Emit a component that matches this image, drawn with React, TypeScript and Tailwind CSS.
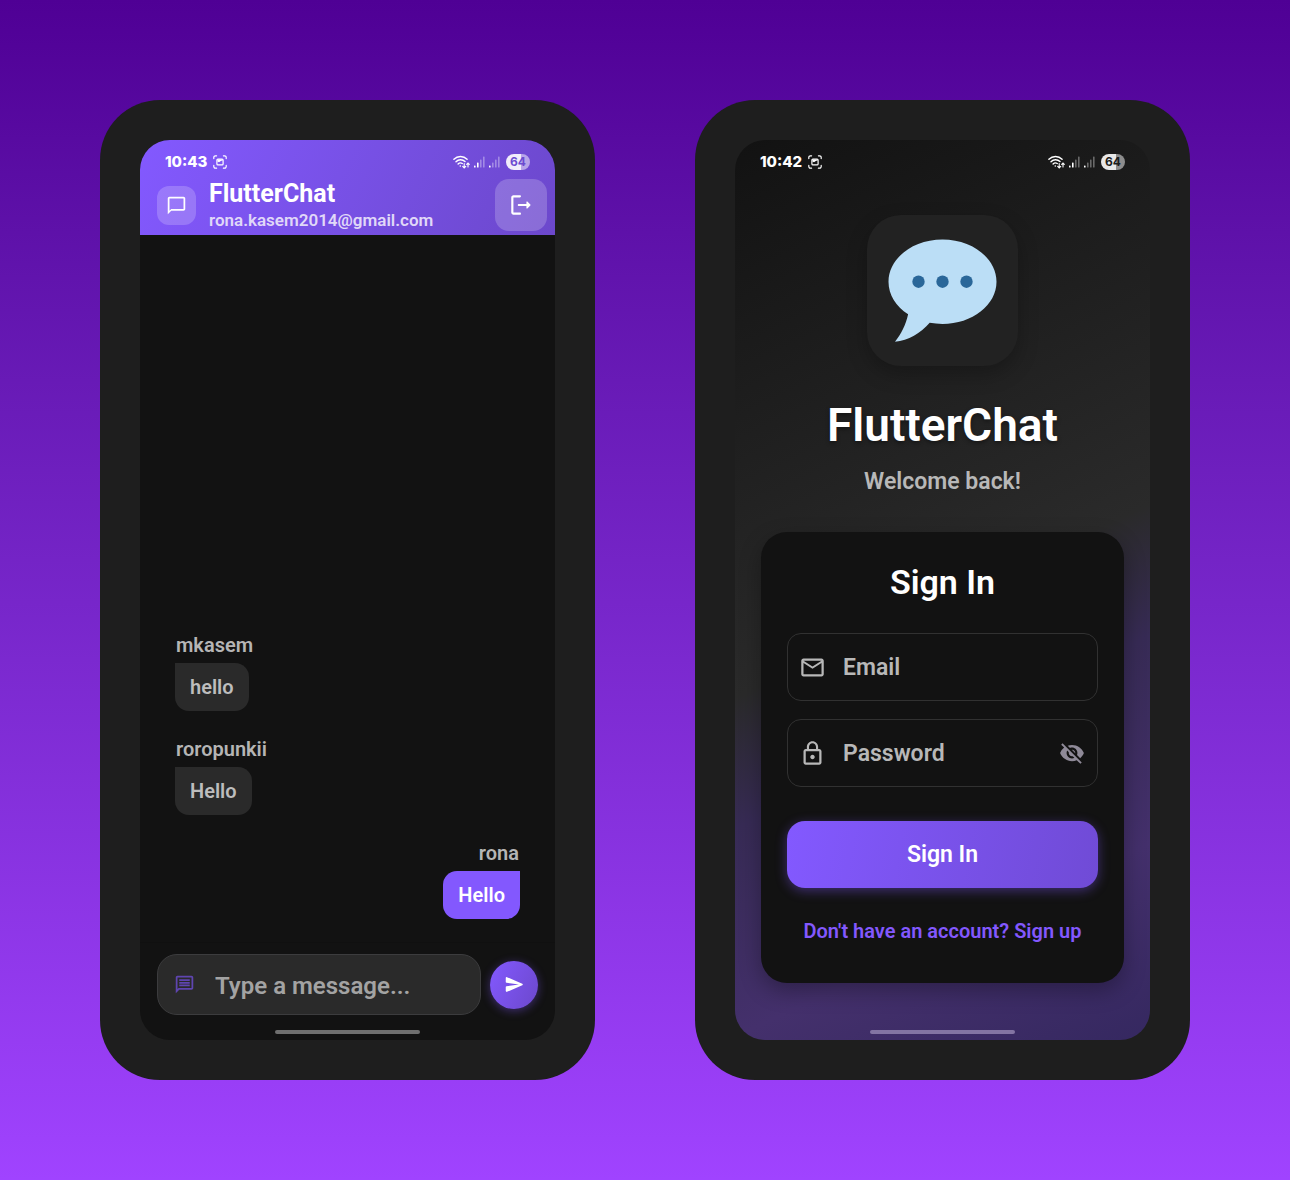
import type { ReactNode } from "react";
import {
  MdLockOutline,
  MdMailOutline,
  MdOutlineChatBubbleOutline,
  MdOutlineMessage,
  MdVisibilityOff,
} from "react-icons/md";

function CaptureIcon() {
  return (
    <svg viewBox="0 0 14 14" className="h-3.5 w-3.5" fill="none" stroke="currentColor" strokeWidth="1.2" strokeLinecap="round">
      <path d="M.8 3.6V2.4A1.6 1.6 0 0 1 2.4.8h1.2M10.4.8h1.2a1.6 1.6 0 0 1 1.6 1.6v1.2M13.2 10.4v1.2a1.6 1.6 0 0 1-1.6 1.6h-1.2M3.6 13.2H2.4a1.6 1.6 0 0 1-1.6-1.6v-1.2" />
      <rect x="3.9" y="4.1" width="6.2" height="5.8" rx="1" />
      <path d="M4.400 6.500V4.500h5.200v1.200H8.200L6 7.200z" fill="currentColor" stroke="none" />
    </svg>
  );
}

function WifiIcon() {
  return (
    <svg viewBox="0 0 17 14" className="h-3.5 w-[17px]" fill="none" stroke="currentColor" strokeWidth="1.4" strokeLinecap="round">
      <path d="M.9 4.2a9.3 9.3 0 0 1 13.2 0M3 6.7a6.3 6.3 0 0 1 9-.1M5.1 9a3.4 3.4 0 0 1 4.2-.5" />
      <circle cx="7.3" cy="11" r=".8" fill="currentColor" stroke="none" />
      <path d="M11.2 8.6v4M9.7 11.4l1.5 1.5 1.5-1.5M15 12V8.200M13.700 9.300 15 8l1.300 1.300" strokeWidth="1.100" />
    </svg>
  );
}

function SignalIcon({ level }: { level: number }) {
  return (
    <svg viewBox="0 0 11 12" className="h-3 w-[11px]" fill="currentColor">
      {[0, 1, 2, 3].map((i) => (
        <rect key={i} x={i * 3} y={[9.5, 6.5, 3.5, 0.5][i]} width="1.6" height={[2, 5, 8, 11][i]} rx=".6" opacity={i < level ? 1 : 0.35} />
      ))}
    </svg>
  );
}

function StatusBar({ time, ink }: { time: string; ink: string }) {
  return (
    <div className="flex h-5 items-center justify-between px-[25px] text-white">
      <div className="flex items-center gap-1.5">
        <span className="font-[Inter] text-[15px] font-extrabold leading-5">{time}</span>
        <CaptureIcon />
      </div>
      <div className="flex items-center gap-1">
        <WifiIcon />
        <SignalIcon level={2} />
        <SignalIcon level={1} />
        <span className={"ml-0.5 flex h-4 w-6 items-center justify-center rounded-full bg-linear-to-r from-white/90 from-64% to-white/50 to-64% font-[Inter] text-[12px] font-bold leading-4 " + ink}>
          64
        </span>
      </div>
    </div>
  );
}

function Phone({ className, children }: { className: string; children: ReactNode }) {
  return (
    <section className="flex rounded-[60px] bg-[#1e1e1e] p-10">
      <div className={"flex min-w-0 flex-1 flex-col overflow-hidden rounded-[30px] " + className}>{children}</div>
    </section>
  );
}

function HomeIndicator({ className }: { className: string }) {
  return <div className={"mx-auto mb-1.5 h-1 w-[35%] rounded-full " + className} />;
}

function Message({ author, text, mine = false }: { author: string; text: string; mine?: boolean }) {
  return (
    <li className={"flex flex-col gap-1.5 " + (mine ? "items-end" : "items-start")}>
      <span className="px-px text-[20px] font-semibold leading-6 text-[#b5b5b5]">{author}</span>
      <p
        className={
          "rounded-[14px] px-[15px] py-3 text-[20px] font-semibold leading-6 " +
          (mine ? "rounded-tr-none bg-[#8358fe] text-white" : "rounded-tl-none bg-[#2a2a2a] text-[#bdbdbd]")
        }
      >
        {text}
      </p>
    </li>
  );
}

function ChatScreen() {
  return (
    <Phone className="bg-[#121212]">
      <header className="bg-linear-115 from-[#8359ff] to-[#6c48cc] pt-3 pb-[3px]">
        <StatusBar time="10:43" ink="text-[#6c4bd0]" />
        <div className="mt-1.5 flex items-center pr-2 pl-[17px]">
          <span className="flex h-[39px] w-[39px] items-center justify-center rounded-xl bg-white/20 text-white">
            <MdOutlineChatBubbleOutline className="h-[21px] w-[21px]" />
          </span>
          <div className="ml-[13px] min-w-0 flex-1 pt-0.5">
            <h1 className="text-[25px] font-bold leading-7 text-white">FlutterChat</h1>
            <p className="text-[17px] font-semibold leading-6 text-[#e0d8f8]">rona.kasem2014@gmail.com</p>
          </div>
          <button type="button" aria-label="Log out" className="flex h-[52px] w-[52px] items-center justify-center rounded-[14px] bg-white/20 text-white">
            <svg viewBox="0 0 24 24" className="h-[26px] w-[26px]" fill="currentColor">
              <path d="M5 5h6c.55 0 1-.45 1-1s-.45-1-1-1H5c-1.100 0-2 .9-2 2v14c0 1.100.9 2 2 2h6c.55 0 1-.45 1-1s-.45-1-1-1H5V5z" />
              <path d="m20.650 11.650-2.790-2.790a.5.5 0 0 0-.86.35V11h-7c-.55 0-1 .45-1 1s.45 1 1 1h7v1.790c0 .45.54.67.85.35l2.790-2.790c.2-.19.2-.51.010-.7z" />
            </svg>
          </button>
        </div>
      </header>
      <ul className="flex flex-1 flex-col justify-end gap-[26px] px-[35px] pb-[23px]">
        <Message author="mkasem" text="hello" />
        <Message author="roropunkii" text="Hello" />
        <Message author="rona" text="Hello" mine />
      </ul>
      <form className="flex items-center gap-[9px] border-t border-[#101010] px-[17px] pt-[11px] pb-[15px]" onSubmit={(e) => e.preventDefault()}>
        <label className="flex h-[61px] min-w-0 flex-1 items-center rounded-[20px] border border-[#3c3c3e] bg-[#2a2a2a] pl-4">
          <MdOutlineMessage className="h-[21px] w-[21px] shrink-0 text-[#5f45b0]" />
          <input
            aria-label="Message"
            placeholder="Type a message..."
            className="ml-5 min-w-0 flex-1 bg-transparent pt-0.5 text-[24px] font-semibold leading-7 text-white outline-none placeholder:text-[#a3a3a3]"
          />
        </label>
        <button
          type="submit"
          aria-label="Send"
          className="flex h-12 w-12 shrink-0 items-center justify-center rounded-full bg-linear-115 from-[#8359ff] to-[#6c48cc] text-white shadow-[0_2px_10px_rgba(131,88,254,0.4)]"
        >
          <svg viewBox="0 0 24 24" className="h-[21px] w-[21px]" fill="currentColor">
            <path d="m3.400 20.400 17.450-7.480a1 1 0 0 0 0-1.840L3.400 3.600a.993.993 0 0 0-1.390.910L2 9.120c0 .5.370.930.870.990L17 12 2.870 13.880c-.5.070-.870.5-.870 1l.010 4.610c0 .710.730 1.200 1.390.910z" />
          </svg>
        </button>
      </form>
      <HomeIndicator className="bg-[#6f6f6f]" />
    </Phone>
  );
}

function Field({ label, type, icon, action }: { label: string; type: string; icon: ReactNode; action?: ReactNode }) {
  return (
    <div className="flex h-[68px] items-center rounded-[14px] border border-[#313131] pr-3 pl-[11px] text-[#b8b8b8]">
      {icon}
      <input
        type={type}
        aria-label={label}
        placeholder={label}
        className="ml-[17px] min-w-0 flex-1 bg-transparent pt-0.5 text-[23px] font-semibold leading-7 text-white outline-none placeholder:text-[#b8b8b8]"
      />
      {action}
    </div>
  );
}

function SignInScreen() {
  return (
    <Phone className="bg-[linear-gradient(155deg,#121212_0%,#2a2a2a_51%,#372b55_63%,#44306c_82%,#352860_100%)] pt-3">
      <StatusBar time="10:42" ink="text-[#1c1c1c]" />
      <div className="flex flex-1 flex-col px-[26px] pt-[43px]">
        <div className="mx-auto flex h-[151px] w-[151px] items-center justify-center rounded-[34px] bg-[#222222] shadow-[0_8px_20px_rgba(0,0,0,0.25)]">
          <svg viewBox="0 0 110 104" className="h-[104px] w-[110px]">
            <path
              d="M54.500.5C24.700.5.5 19.400.5 42.700c0 13 7.500 24.700 19.600 32.500C18 85.500 13 95 7 102.800 20.500 101.500 32.500 94.500 41.700 83.800c4.100.7 8.400 1.100 12.800 1.100 29.800 0 54-18.900 54-42.200S84.300.5 54.500.5z"
              fill="#bbdef6"
            />
            <g fill="#2a6799">
              <circle cx="30.500" cy="42.700" r="6.200" />
              <circle cx="54.500" cy="42.700" r="6.200" />
              <circle cx="78.500" cy="42.700" r="6.200" />
            </g>
          </svg>
        </div>
        <h1 className="mt-[33px] text-center text-[46px] font-semibold leading-[52px] text-white [text-shadow:0_2px_4px_rgba(0,0,0,0.4)]">FlutterChat</h1>
        <p className="mt-[17px] text-center text-[23px] font-semibold leading-7 text-[#b8b8b8]">Welcome back!</p>
        <form
          className="mt-9 flex flex-col rounded-[26px] bg-[#121212] px-[26px] pt-[30px] pb-[38px] shadow-[0_8px_22px_rgba(0,0,0,0.3)]"
          onSubmit={(e) => e.preventDefault()}
        >
          <h2 className="text-center text-[34px] font-semibold leading-10 text-white">Sign In</h2>
          <div className="mt-[31px] flex flex-col gap-[18px]">
            <Field label="Email" type="email" icon={<MdMailOutline className="h-[27px] w-[27px] shrink-0" />} />
            <Field
              label="Password"
              type="password"
              icon={<MdLockOutline className="h-[27px] w-[27px] shrink-0" />}
              action={
                <button type="button" aria-label="Show password" className="text-[#8f8a98]">
                  <MdVisibilityOff className="h-[26px] w-[26px]" />
                </button>
              }
            />
          </div>
          <button
            type="submit"
            className="mt-[34px] h-[67px] rounded-[18px] bg-linear-100 from-[#8359ff] to-[#704bd6] text-[23px] font-semibold leading-7 text-white shadow-[0_3px_12px_rgba(131,88,254,0.4)]"
          >
            Sign In
          </button>
          <a href="#signup" className="mt-[29px] text-center text-[20px] font-semibold leading-7 text-[#8358fe]">
            Don't have an account? Sign up
          </a>
        </form>
      </div>
      <HomeIndicator className="bg-[#8374a3]" />
    </Phone>
  );
}

export default function App() {
  return (
    <main className="grid min-h-screen grid-cols-2 gap-25 bg-linear-to-b from-[#4f0095] to-[#a043ff] p-25 font-[Roboto,sans-serif]">
      <ChatScreen />
      <SignInScreen />
    </main>
  );
}
